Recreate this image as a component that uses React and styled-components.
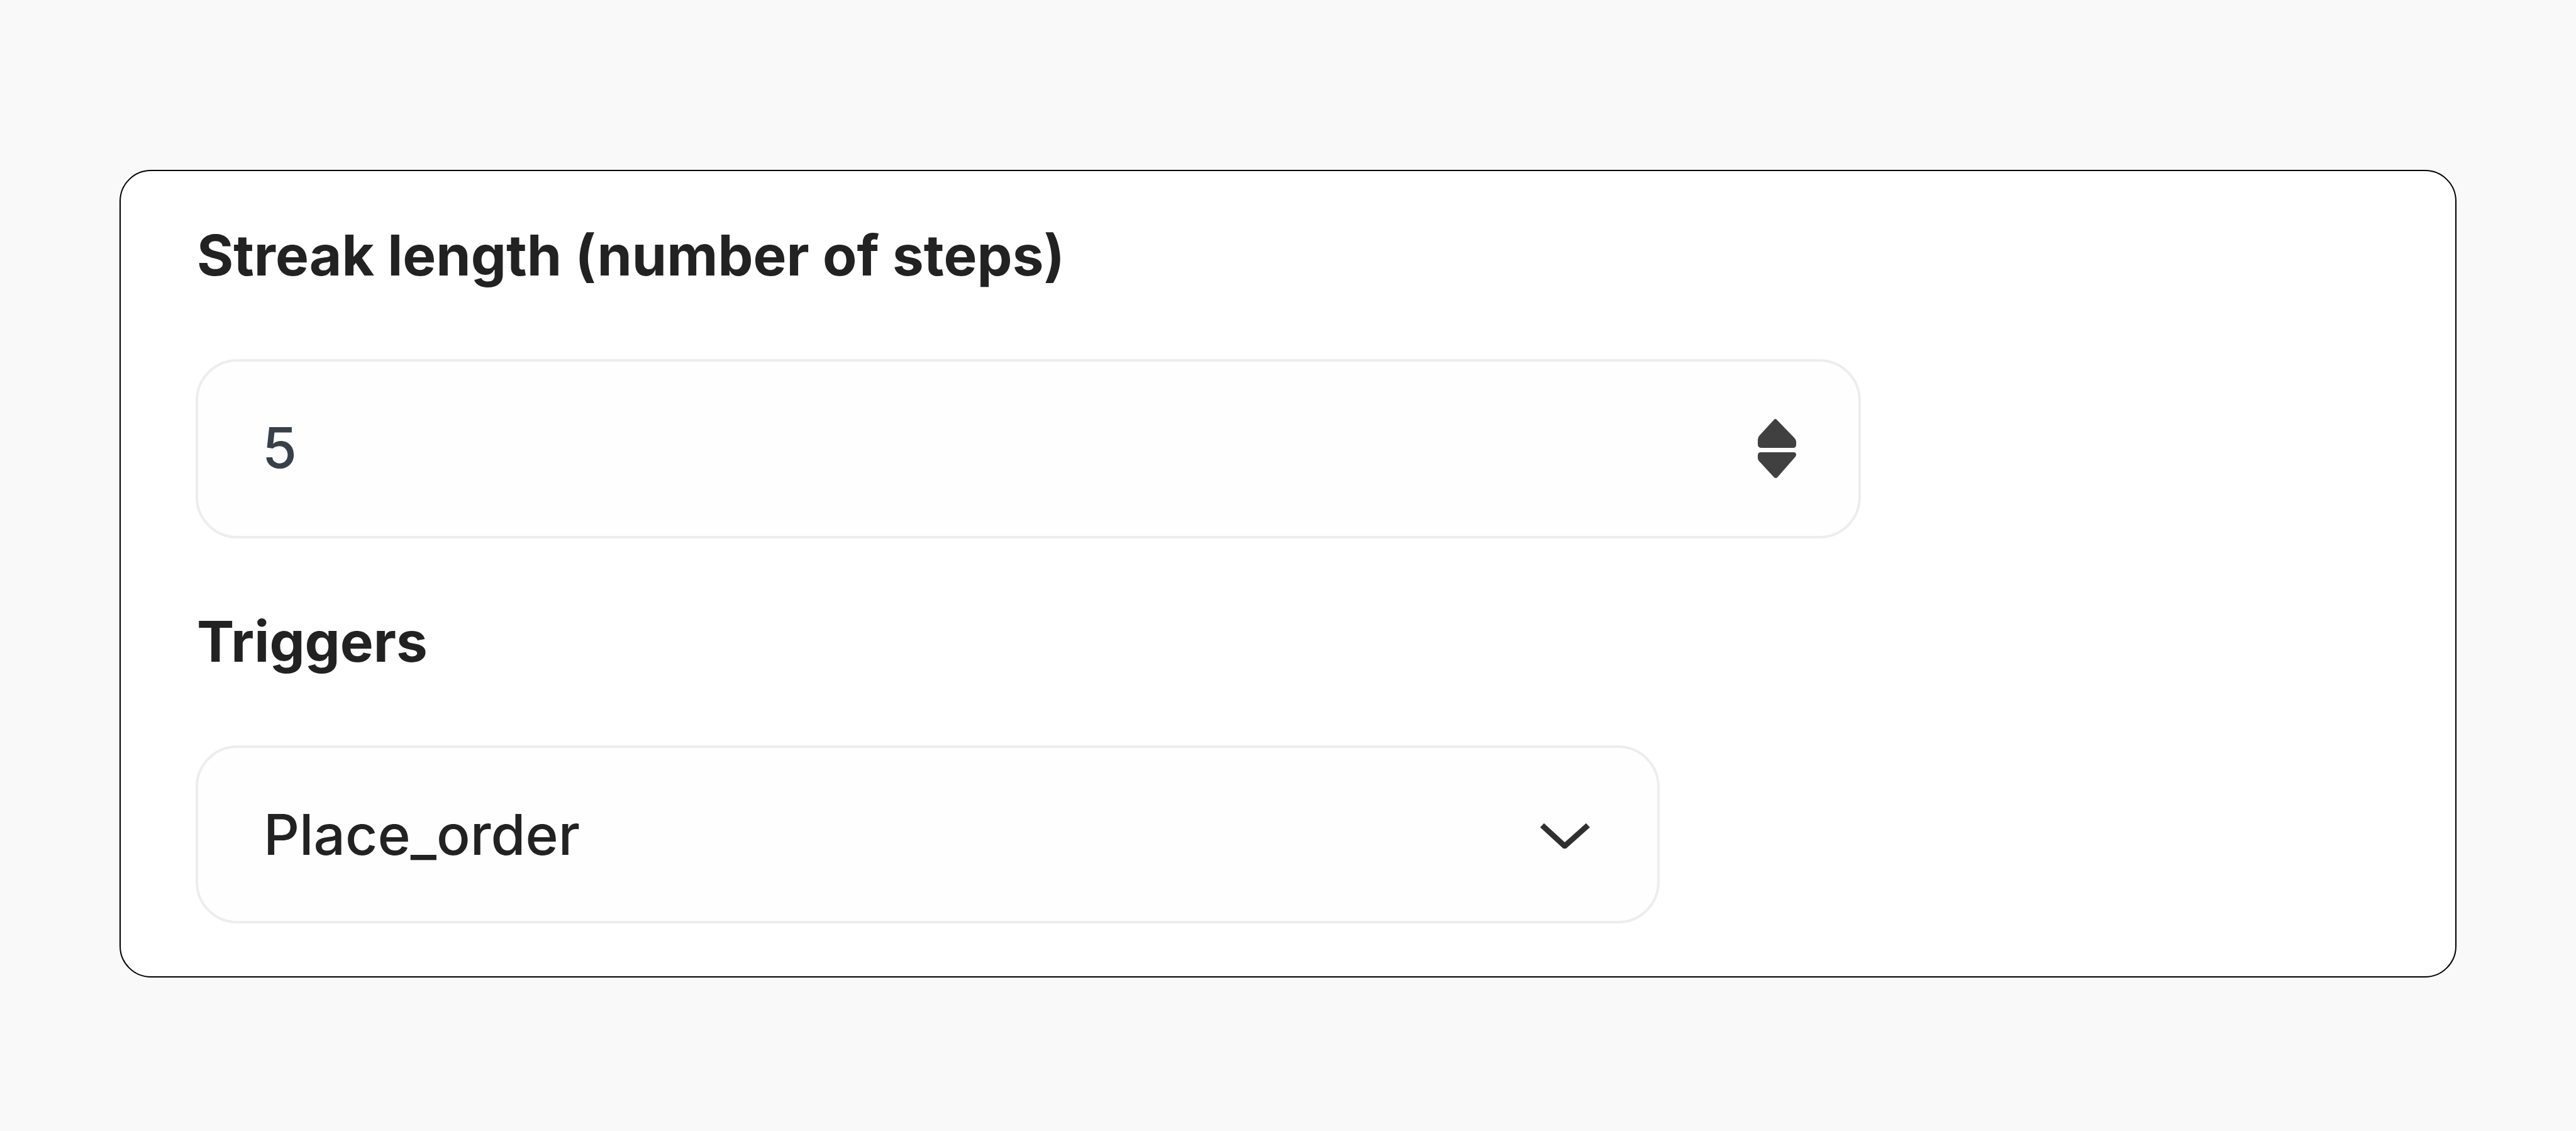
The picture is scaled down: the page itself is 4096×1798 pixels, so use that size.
import React, { useState } from "react";
import styled, { createGlobalStyle } from "styled-components";

const GlobalStyle = createGlobalStyle`
  * {
    box-sizing: border-box;
  }
  body {
    margin: 0;
    background: #f9f9f9;
    font-family: Inter, "Liberation Sans", sans-serif;
  }
`

const Page = styled.main`
  min-height: 100vh;
  padding: 270px 190px 244px;
`

const Panel = styled.form`
  display: flex;
  flex-direction: column;
  gap: 109px;
  padding: 79px 119px 84px;
  border: 2px solid #000;
  border-radius: 50px;
  background: #fff;
`

const Group = styled.div`
  display: flex;
  flex-direction: column;
  gap: 110px;
`

const Label = styled.label`
  align-self: flex-start;
  padding-left: 2px;
  font-size: 89px;
  font-weight: 700;
  line-height: 110px;
  color: #222;
`

const Field = styled.div`
  display: grid;
  grid-template-columns: minmax(0, 1fr) auto;
  align-items: center;
  width: 100%;
  max-width: ${(props) => props.$width}px;
  height: ${(props) => props.$height}px;
  border: 4px solid #ededed;
  border-radius: 66px;
  background: #fefefe;
`

const NumberInput = styled.input`
  width: 100%;
  height: 100%;
  padding: 0 0 4px 102px;
  border: 0;
  outline: 0;
  background: transparent;
  font: 500 89px/110px Inter, "Liberation Sans", sans-serif;
  color: #38414a;
  appearance: textfield;

  &::-webkit-inner-spin-button,
  &::-webkit-outer-spin-button {
    appearance: none;
    margin: 0;
  }
`

const Stepper = styled.div`
  display: flex;
  flex-direction: column;
  gap: 7px;
  margin-right: 98px;
`

const StepButton = styled.button`
  display: block;
  padding: 0;
  border: 0;
  background: none;
  cursor: pointer;

  svg {
    display: block;
    fill: #404040;
  }
`

const Select = styled.select`
  grid-area: 1 / 1 / 2 / 3;
  width: 100%;
  height: 100%;
  padding: 0 220px 0 104px;
  border: 0;
  outline: 0;
  appearance: none;
  background: transparent;
  font: 500 89px/110px Inter, "Liberation Sans", sans-serif;
  color: #222;
`

const Chevron = styled.svg`
  grid-area: 1 / 2 / 2 / 3;
  margin-right: 106px;
  pointer-events: none;
  fill: none;
  stroke: #303030;
  stroke-width: 9;
  stroke-linejoin: round;
`

function App() {
  const [steps, setSteps] = useState(5);
  const [trigger, setTrigger] = useState("Place_order");

  return (
    <>
      <GlobalStyle />
      <Page>
        <Panel>
          <Group>
            <Label htmlFor="steps">Streak length (number of steps)</Label>
            <Field $width={2648} $height={285}>
              <NumberInput
                id="steps"
                type="number"
                value={steps}
                onChange={(e) => setSteps(e.target.value)}
              />
              <Stepper>
                <StepButton type="button" aria-label="Increase" onClick={() => setSteps(Number(steps) + 1)}>
                  <svg width="62" height="46" viewBox="0 0 62 46">
                    <path d="M26 1Q28 -1 30 1L58 30Q61 33 61 36V41Q61 46 56 46H6Q0 46 0 40V33Q0 29 3 26Z" />
                  </svg>
                </StepButton>
                <StepButton type="button" aria-label="Decrease" onClick={() => setSteps(Number(steps) - 1)}>
                  <svg width="62" height="42" viewBox="0 0 62 42">
                    <path d="M5 0H57Q61 0 61 4Q61 6 59 8L31 40Q29 42 26 40L2 14Q0 12 0 9V5Q0 0 5 0Z" />
                  </svg>
                </StepButton>
              </Stepper>
            </Field>
          </Group>
          <Group>
            <Label htmlFor="trigger">Triggers</Label>
            <Field $width={2328} $height={283}>
              <Select id="trigger" value={trigger} onChange={(e) => setTrigger(e.target.value)}>
                <option>Place_order</option>
              </Select>
              <Chevron width="80" height="44" viewBox="0 0 80 44" aria-hidden="true">
                <path d="M3 7L39 40L76 7" />
              </Chevron>
            </Field>
          </Group>
        </Panel>
      </Page>
    </>
  );
}

export default App;
